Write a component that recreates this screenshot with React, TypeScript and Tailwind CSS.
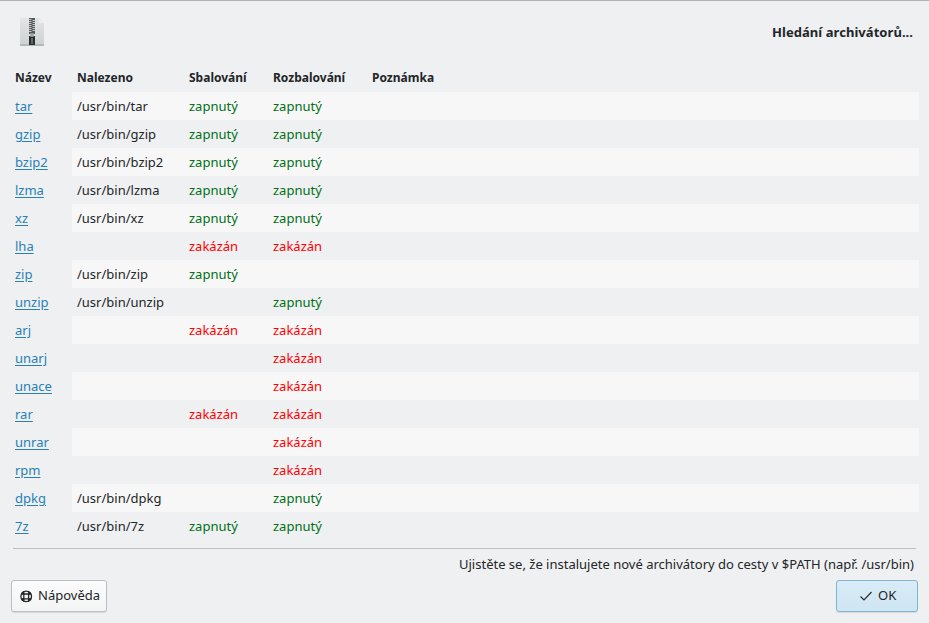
const rows: [string, string, string, string][] = [
  ["tar", "/usr/bin/tar", "zapnutý", "zapnutý"],
  ["gzip", "/usr/bin/gzip", "zapnutý", "zapnutý"],
  ["bzip2", "/usr/bin/bzip2", "zapnutý", "zapnutý"],
  ["lzma", "/usr/bin/lzma", "zapnutý", "zapnutý"],
  ["xz", "/usr/bin/xz", "zapnutý", "zapnutý"],
  ["lha", "", "zakázán", "zakázán"],
  ["zip", "/usr/bin/zip", "zapnutý", ""],
  ["unzip", "/usr/bin/unzip", "", "zapnutý"],
  ["arj", "", "zakázán", "zakázán"],
  ["unarj", "", "", "zakázán"],
  ["unace", "", "", "zakázán"],
  ["rar", "", "zakázán", "zakázán"],
  ["unrar", "", "", "zakázán"],
  ["rpm", "", "", "zakázán"],
  ["dpkg", "/usr/bin/dpkg", "", "zapnutý"],
  ["7z", "/usr/bin/7z", "zapnutý", "zapnutý"],
];

function Status({ v }: { v: string }) {
  return (
    <span className={v === "zapnutý" ? "text-[#006f18]" : "text-[#ff0000]"}>{v}</span>
  );
}

function ZipIcon() {
  return (
    <svg width="24" height="28" viewBox="0 0 24 28">
      <defs>
        <linearGradient id="zipBg" x1="0" y1="0" x2="0" y2="1">
          <stop offset="0" stopColor="#e3e5e6" />
          <stop offset="1" stopColor="#cdd1d1" />
        </linearGradient>
      </defs>
      <path d="M0 0H19L24 5V28H0Z" fill="url(#zipBg)" />
      <path d="M19 0L24 5H19Z" fill="#eceeee" />
      <rect x="0" y="26" width="24" height="2" fill="#b4b8b8" />
      <rect x="9" y="0" width="6" height="16" fill="#54595c" />
      <path d="M9 1h2.5v1H9zM12.5 2h2.5v1h-2.5zM9 3h2.5v1H9zM12.5 4h2.5v1h-2.5zM9 5h2.5v1H9zM12.5 6h2.5v1h-2.5zM9 7h2.5v1H9zM12.5 8h2.5v1h-2.5zM9 9h2.5v1H9zM12.5 10h2.5v1h-2.5zM9 11h2.5v1H9zM12.5 12h2.5v1h-2.5zM9 13h2.5v1H9z" fill="#c9cccd" />
      <rect x="9" y="18" width="6" height="9" rx="0.5" fill="#2b2e31" />
      <rect x="10.5" y="15" width="3" height="4" fill="#9a9ea0" />
      <rect x="11" y="20" width="2" height="6" fill="#63686b" />
    </svg>
  );
}

function HelpIcon() {
  return (
    <svg width="16" height="16" viewBox="0 0 16 16" fill="none" stroke="#232629">
      <circle cx="8.2" cy="8.4" r="5.3" strokeWidth="1.3" />
      <path d="M5.8 3V13.8M10.6 3V13.8M3 6H13.4M3 10.8H13.4" strokeWidth="1.3" />
      <path d="M4 4.2L5.8 6M12.4 4.2L10.6 6M4 12.6L5.8 10.8M12.4 12.6L10.6 10.8" strokeWidth="2" />
    </svg>
  );
}

export default function App() {
  return (
    <div
      className="flex h-[623px] w-[929px] flex-col overflow-hidden border-t border-[#b0b2b4] bg-[#eff0f1] text-[13px] text-[#232629]"
      style={{ fontFamily: '"Noto Sans", sans-serif' }}
    >
      <div className="flex h-[62px] items-start justify-between pl-5 pr-4 pt-[17px]">
        <ZipIcon />
        <div className="mt-[4px] font-bold leading-[20px] tracking-[0.05px]">Hledání archivátorů...</div>
      </div>

      <div className="ml-[15px] mr-[10px] flex h-[29px] items-center pt-[1px] text-[12px] font-bold">
        <div className="w-[62px]">Název</div>
        <div className="w-[112px]">Nalezeno</div>
        <div className="w-[84px]">Sbalování</div>
        <div className="w-[99px]">Rozbalování</div>
        <div>Poznámka</div>
      </div>

      <div className="ml-[15px] mr-[10px] flex flex-col">
        {rows.map((r, i) => (
          <div key={r[0]} className="flex h-[28px] items-center">
            <div className="flex h-full w-[57px] items-center pt-[2px]">
              <span className="text-[#2980b9] underline underline-offset-[2px]">{r[0]}</span>
            </div>
            <div
              className={`flex h-full flex-1 items-center pl-[5px] pt-[2px] ${i % 2 === 0 ? "bg-[#f7f7f7]" : ""}`}
            >
              <div className="w-[112px]">{r[1]}</div>
              <div className="w-[84px]">{r[2] && <Status v={r[2]} />}</div>
              <div>{r[3] && <Status v={r[3]} />}</div>
            </div>
          </div>
        ))}
      </div>

      <div className="mx-[13px] mt-[8px] border-t border-[#bcbebf]" />
      <div className="mr-[15px] mt-[5px] text-right leading-[20px]">
        Ujistěte se, že instalujete nové archivátory do cesty v $PATH (např. /usr/bin)
      </div>

      <div className="mt-[6px] flex items-start justify-between pl-[11px] pr-[11px]">
        <button className="flex h-[32px] w-[96px] items-center gap-[4px] rounded-[3px] border border-[#bcbebf] bg-gradient-to-b from-[#fcfcfc] to-[#f3f4f4] pl-[6px] text-[#232629] shadow-[0_1px_1px_rgba(0,0,0,0.1)]">
          <HelpIcon />
          <span>Nápověda</span>
        </button>
        <button className="flex h-[32px] w-[82px] items-center gap-[4px] rounded-[3px] border border-[#7fb5d5] bg-gradient-to-b from-[#d9ecf7] to-[#cfe5f2] pl-[21px] text-[#232629] shadow-[0_1px_1px_rgba(0,0,0,0.1)]">
          <svg width="16" height="16" viewBox="0 0 16 16" fill="none" stroke="#232629" strokeWidth="1.1">
            <path d="M2.5 8.5L6 12L13.5 4" />
          </svg>
          <span>OK</span>
        </button>
      </div>
    </div>
  );
}
